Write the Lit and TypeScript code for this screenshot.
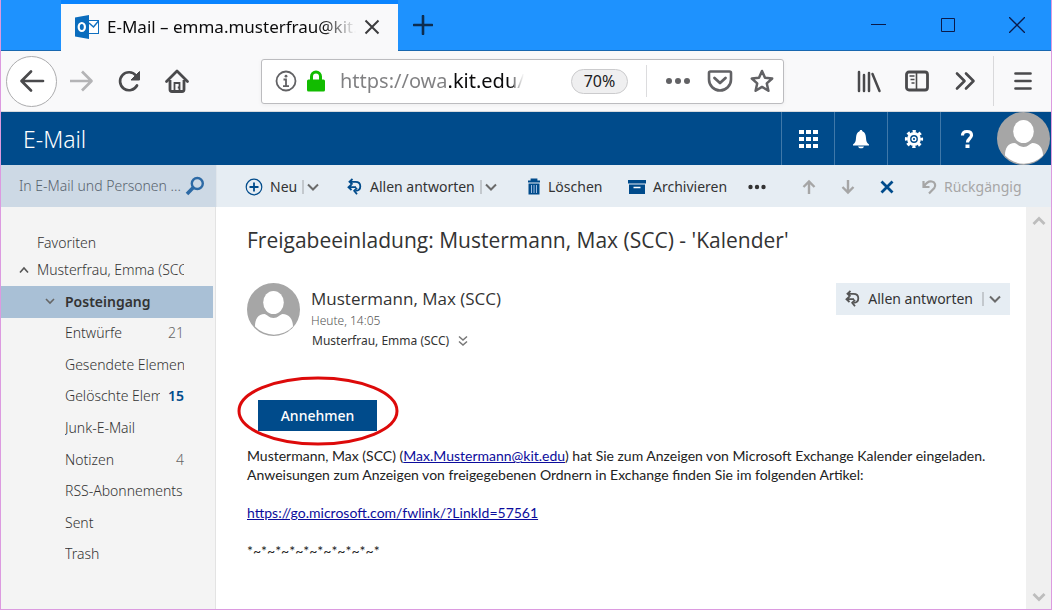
import { LitElement, html, css, svg, type TemplateResult } from "lit";
import { customElement } from "lit/decorators.js";
import { classMap } from "lit/directives/class-map.js";

interface Folder {
  name: string;
  count?: number;
  unread?: boolean;
  selected?: boolean;
}

const FOLDERS: Folder[] = [
  { name: "Posteingang", selected: true },
  { name: "Entwürfe", count: 21 },
  { name: "Gesendete Elemente" },
  { name: "Gelöschte Elemente", count: 15, unread: true },
  { name: "Junk-E-Mail" },
  { name: "Notizen", count: 4 },
  { name: "RSS-Abonnements" },
  { name: "Sent" },
  { name: "Trash" },
];

const icon = (w: number, h: number, body: TemplateResult) => html`
  <svg width=${w} height=${h} viewBox="0 0 ${w} ${h}" fill="none" stroke="currentColor" aria-hidden="true">${body}</svg>
`;

const outlook = icon(24, 24, svg`
  <rect x="11.5" y="5.5" width="12" height="13" fill="#fff" stroke="#0f6fc0"/>
  <path d="M14 8l4.500 4 5-6" stroke="#0f6fc0" stroke-width="1.500"/>
  <path d="M0 2.500L14 0v24L0 21.500z" fill="#0a6cbd" stroke="none"/>
  <ellipse cx="6.800" cy="12" rx="3.100" ry="4" stroke="#fff" stroke-width="2.200"/>`);
const tabClose = icon(16, 16, svg`<path d="M1.500 1.500l13 13M14.500 1.500l-13 13" stroke-width="2"/>`);
const plus = icon(20, 20, svg`<path d="M10 1v18M1 10h18" stroke-width="2.600" stroke-linecap="round"/>`);
const minimize = icon(16, 16, svg`<path d="M0 7.500h15"/>`);
const maximize = icon(16, 16, svg`<path d="M1.500 1.500h13v13h-13z"/>`);
const winClose = icon(16, 16, svg`<path d="M0 0l16 16M16 0L0 16" stroke-width="1.300"/>`);
const back = icon(26, 24, svg`<path d="M24 12H3M12 2.500L2.500 12l9.500 9.500" stroke-width="2.700" stroke-linecap="round" stroke-linejoin="round"/>`);
const forward = icon(26, 24, svg`<path d="M2 12h21M14 2.500l9.500 9.500-9.500 9.500" stroke-width="2.700" stroke-linejoin="round"/>`);
const reload = icon(24, 24, svg`
  <path d="M20 16.500A9 9 0 1 1 19 6.500" stroke-width="2.700" stroke-linecap="round"/>
  <path d="M22.500 2.500v8.500h-8.500z" fill="currentColor" stroke-width="1" stroke-linejoin="round"/>`);
const home = icon(26, 26, svg`
  <path d="M2.500 13.500L13 3l10.500 10.500" stroke-width="2.800" stroke-linecap="round" stroke-linejoin="round"/>
  <path d="M6 12v9.500c0 1.200.8 2 2 2h10c1.200 0 2-.8 2-2V12" stroke-width="2.800"/>
  <path d="M10.500 23v-8h5v8M13.800 19.500h1.200" stroke-width="1.800"/>`);
const info = icon(22, 22, svg`
  <circle cx="11" cy="11" r="9.500" stroke-width="1.800"/>
  <path d="M8.500 9.500H11V16M8 16.200h6" stroke-width="1.800"/><circle cx="11" cy="6.200" r="1.400" fill="currentColor" stroke="none"/>`);
const lock = icon(20, 22, svg`
  <path d="M5.500 11V6.500a4.500 4.500 0 0 1 9 0V11" stroke-width="3"/>
  <rect x="1" y="9.500" width="18" height="12" rx="1.500" fill="currentColor" stroke="none"/>`);
const pageDots = icon(26, 8, svg`<g fill="currentColor" stroke="none"><circle cx="4" cy="4" r="3"/><circle cx="13" cy="4" r="3"/><circle cx="22" cy="4" r="3"/></g>`);
const pocket = icon(26, 24, svg`
  <path d="M3.500 2.500h19a1.500 1.500 0 0 1 1.500 1.500v6.500a11 11 0 0 1-22 0V4a1.500 1.500 0 0 1 1.500-1.500z" stroke-width="2.600"/>
  <path d="M7.500 9l5.500 5 5.500-5" stroke-width="2.800" stroke-linecap="round" stroke-linejoin="round"/>`);
const star = icon(26, 26, svg`<path d="M13 3l3 6.800 7.200.7-5.400 4.900 1.600 7.400-6.400-3.900-6.400 3.900 1.600-7.400L2.800 10.500l7.200-.7z" stroke-width="2.500" stroke-linejoin="round"/>`);
const library = icon(26, 24, svg`<path d="M3 3v19M8 6v16M13 4v18M16.500 5l7 17" stroke-width="2.500" stroke-linecap="round"/>`);
const sidebarIcon = icon(26, 24, svg`
  <rect x="2.500" y="3" width="21" height="18" rx="2.500" stroke-width="2.800"/>
  <path d="M12.500 3v18" stroke-width="1.600"/><path d="M5.500 7h5M6.500 10.500h4M7.500 14h3" stroke-width="1.400"/>`);
const more = icon(22, 20, svg`<path d="M3 2.500L10.500 10 3 17.500M12 2.500l7.500 7.500-7.500 7.500" stroke-width="2.600" stroke-linecap="round" stroke-linejoin="round"/>`);
const burger = icon(20, 20, svg`<path d="M2.500 2.500h15M2.500 10h15M2.500 17.500h15" stroke-width="2.700" stroke-linecap="round"/>`);

const waffle = icon(20, 20, svg`<g fill="currentColor" stroke="none">${[0, 7, 14].map((y) =>
  [0, 7, 14].map((x) => svg`<rect x=${x + 1} y=${y + 1} width="5" height="4"/>`))}</g>`);
const bell = icon(18, 20, svg`
  <path d="M9 1c.8 0 1.200.5 1.400 1.200C13 3.200 13.800 5.500 14 9c.2 3.500.8 5 3 6.500v1H1v-1C3.200 14 3.800 12.500 4 9c.2-3.500 1-5.800 3.600-6.800C7.800 1.500 8.200 1 9 1z" fill="currentColor" stroke="none"/>
  <path d="M6 17.500h6c-.5 1.300-1.500 1.800-3 1.800s-2.500-.5-3-1.800z" fill="currentColor" stroke="none"/>`);
const gear = icon(20, 20, svg`
  <circle cx="10" cy="10" r="5.400" stroke-width="3"/>
  <circle cx="10" cy="10" r="7.700" stroke-width="2.800" stroke-dasharray="3.200 2.847" stroke-dashoffset="1.600"/>
  <circle cx="10" cy="10" r="1.800" stroke-width="1.400"/>`);
const help = icon(14, 20, svg`
  <path d="M2.500 6.500C2.500 3.500 4.500 2.500 7 2.500s4.500 1.200 4.500 3.700c0 3.300-4 3.300-4 7.300" stroke-width="3.200"/>
  <rect x="5.500" y="15.500" width="4" height="3.500" fill="currentColor" stroke="none"/>`);
const avatar = icon(53, 53, svg`
  <circle cx="26.500" cy="26.500" r="26.500" fill="#a6a6a6" stroke="none"/>
  <ellipse cx="26.500" cy="19.500" rx="10.300" ry="11.500" fill="#fff" stroke="none"/>
  <path d="M8 43.500C8 36 11 31 17.500 31c2 0 4.500 4 9 4s7-4 9-4C42 31 46 36 46 43.500a26 26 0 0 1-38 0z" fill="#fff" stroke="none"/>`);

const search = icon(20, 20, svg`<circle cx="12.300" cy="7.500" r="5.500" stroke-width="2.400"/><path d="M8.300 11.500L2 18" stroke-width="3.600"/>`);
const newItem = icon(18, 18, svg`<circle cx="9" cy="9" r="7.800" stroke-width="1.200"/><path d="M9 4.500v9M4.500 9h9" stroke-width="1.800"/>`);
const reply = icon(16, 18, svg`
  <path d="M5.500 1L2.500 3.800l3 2.700M3 3.800h5.500c3 0 4.800 1.700 4.800 4.400 0 2.800-1.800 4.500-4.800 4.600" stroke-width="1.800"/>
  <path d="M4.500 6.500L1.500 9.200l3 2.800M2 9.200h7M10 9.800l-2.800 3 2.800 3.400" stroke-width="1.800"/>`);
const trash = icon(14, 18, svg`
  <path d="M1 3.500h12M4.500 3V1.500h5V3" stroke-width="1.800"/>
  <path d="M1.500 5.500h11v11h-11z" fill="currentColor" stroke="none"/>
  <path d="M4.500 7v8M7 7v8M9.500 7v8" stroke="#9dbbe0"/>`);
const archive = icon(18, 16, svg`
  <g fill="currentColor" stroke="none"><path d="M0 1h18v3.500H0zM1 5.500h16V15H1z"/></g><path d="M5.500 8.500h7" stroke="#fff" stroke-width="1.500"/>`);
const dots = icon(18, 6, svg`<g fill="#333" stroke="none"><circle cx="2.500" cy="3" r="2.200"/><circle cx="9" cy="3" r="2.200"/><circle cx="15.500" cy="3" r="2.200"/></g>`);
const up = icon(14, 16, svg`<path d="M7 15V2.500M1.500 8L7 2.500 12.500 8" stroke-width="2.400"/>`);
const down = icon(14, 16, svg`<path d="M7 1v12.500M1.500 8L7 13.500 12.500 8" stroke-width="2.400"/>`);
const dismiss = icon(14, 14, svg`<path d="M1.500 1.500l11 11M12.500 1.500l-11 11" stroke-width="2.800"/>`);
const undo = icon(16, 16, svg`<path d="M2.500 2v6h6M3 7.500C5 4 8 2 10.800 2.500c3.500.6 4.200 4 2.500 6.500L8 14.500" stroke-width="2.200"/>`);
const chevDown = icon(12, 8, svg`<path d="M1 1.500l5 5 5-5" stroke-width="2"/>`);
const chevSmall = icon(10, 7, svg`<path d="M1 1l4 4 4-4" stroke-width="1.600"/>`);
const chevUp = icon(10, 8, svg`<path d="M1 6.500l4-4.500 4 4.500" stroke-width="1.600"/>`);
const chevDouble = icon(10, 12, svg`<path d="M1 1.500L5 5l4-3.500M1 6.500L5 10l4-3.500" stroke="#777" stroke-width="1.500"/>`);
const scrollUp = icon(14, 10, svg`<path d="M1.500 8L7 2.500 12.500 8" stroke-width="2.800"/>`);
const scrollDown = icon(14, 10, svg`<path d="M1.500 2L7 7.500 12.500 2" stroke-width="2.800"/>`);

@customElement("browser-chrome")
export class BrowserChrome extends LitElement {
  static styles = css`
    :host { display: block; font-family: "Noto Sans", "Open Sans", sans-serif; color: #0c0c0d; }
    button { border: 0; margin: 0; padding: 0; background: none; color: inherit; font: inherit; display: grid; place-items: center; flex: none; }
    svg { display: block; flex: none; }
    .titlebar { display: flex; height: 50px; background: #1e92fe; border-bottom: 1px solid #1868b0; padding-left: 60px; }
    .tab { display: flex; align-items: center; width: 337px; height: 51px; margin-bottom: -1px; box-sizing: border-box; background: #f9f9fa; border-top: 4px solid #0a84ff; padding: 0 18px 2px 14px; }
    .title { flex: 1; min-width: 0; margin: 0 8px; font-size: 17px; line-height: 24px; white-space: nowrap; overflow: hidden;
      -webkit-mask-image: linear-gradient(to left, transparent, #000 34px); mask-image: linear-gradient(to left, transparent, #000 34px); }
    .close { color: #3c3c3e; }
    .add { width: 50px; color: #0d2d50; }
    .window { margin-left: auto; display: flex; color: #0a1a4a; }
    .window button { width: 69px; }
    .nav { display: flex; align-items: center; height: 61px; box-sizing: border-box; background: #f9f9fa; border-bottom: 1px solid #d8dadd; color: #4a4a4c; padding-left: 5px; }
    .back { width: 51px; height: 51px; box-sizing: border-box; border: 1px solid #acacae; border-radius: 50%; background: #fff; }
    .tool { width: 48px; height: 51px; }
    .off { color: #b4b4b6; }
    .address { flex: 1; min-width: 0; margin: 0 61px 0 60px; display: flex; align-items: center; height: 45px; box-sizing: border-box; border: 1px solid #bcbcbf; border-radius: 3px; background: #fff; box-shadow: 0 1px 4px #0000000d; padding-left: 13px; color: #626265; }
    .lock { color: #12bc00; margin: 0 14px 0 9px; }
    .url { flex: 1; min-width: 0; border: 0; outline: 0; padding: 0; font: 20px/28px "Noto Sans", sans-serif; color: transparent;
      background: linear-gradient(to right, #808082 0 109px, #0c0c0d 109px 174px, #808082 174px, #ffffff 184px); -webkit-background-clip: text; background-clip: text; }
    .zoom { width: 57px; height: 25px; box-sizing: border-box; border: 1px solid #cbcbcd; border-radius: 13px; background: #efeff0; color: #1c1c1e; font-size: 16px; line-height: 22px; }
    .rule { width: 1px; height: 32px; background: #dcdcde; margin: 0 10px 0 18px; }
    .act { width: 42px; height: 40px; }
    .menu { width: 58px; height: 50px; border-left: 1px solid #d9d9db; margin-left: 4px; }
  `;

  render() {
    return html`
      <div class="titlebar">
        <div class="tab">
          ${outlook}<span class="title">E-Mail – emma.musterfrau@kit.edu</span>
          <button class="close" aria-label="Tab schließen">${tabClose}</button>
        </div>
        <button class="add" aria-label="Neuer Tab">${plus}</button>
        <div class="window">
          <button aria-label="Minimieren">${minimize}</button>
          <button aria-label="Maximieren">${maximize}</button>
          <button aria-label="Schließen">${winClose}</button>
        </div>
      </div>
      <nav class="nav">
        <button class="back" aria-label="Zurück">${back}</button>
        <button class="tool off" aria-label="Vor">${forward}</button>
        <button class="tool" aria-label="Neu laden">${reload}</button>
        <button class="tool" aria-label="Startseite">${home}</button>
        <div class="address">
          ${info}<span class="lock">${lock}</span>
          <input class="url" aria-label="Adresse" value="https://owa.kit.edu/" />
          <button class="zoom">70%</button>
          <span class="rule"></span>
          <button class="act" aria-label="Seitenaktionen">${pageDots}</button>
          <button class="act" aria-label="Pocket">${pocket}</button>
          <button class="act" aria-label="Lesezeichen">${star}</button>
        </div>
        <button class="tool" aria-label="Bibliothek">${library}</button>
        <button class="tool" aria-label="Sidebars">${sidebarIcon}</button>
        <button class="tool" aria-label="Weitere Werkzeuge">${more}</button>
        <button class="menu" aria-label="Menü">${burger}</button>
      </nav>
    `;
  }
}

@customElement("app-root")
export class AppRoot extends LitElement {
  static styles = css`
    :host { display: flex; flex-direction: column; min-height: 100vh; box-sizing: border-box; border: 1px solid #dc9ae0; border-top: 0; font: 14px/20px "Noto Sans", "Open Sans", sans-serif; color: #333; background: #fff; }
    button { border: 0; margin: 0; padding: 0; background: none; color: inherit; font: inherit; }
    svg { display: block; flex: none; }
    .header { display: flex; align-items: center; height: 53px; background: #004b8b; color: #fff; padding-right: 1px; }
    .brand { margin: 0 auto 0 22px; font-size: 23px; line-height: 30px; font-weight: 300; }
    .cell { width: 53px; height: 53px; box-sizing: border-box; border-left: 1px solid #3f78a9; display: grid; place-items: center; }
    .me { margin-left: 4px; }
    .body { flex: 1; display: grid; grid-template-columns: 215px minmax(0, 1fr); grid-template-rows: 42px 1fr; }
    .search { display: flex; align-items: center; background: #cdd9e5; color: #2d6aa5; padding: 0 11px 0 18px; gap: 1px; }
    .search input { flex: 1; min-width: 0; border: 0; outline: 0; padding: 0; background: none; font: 300 14px/20px "Noto Sans", sans-serif; }
    .search input::placeholder { color: #58636e; opacity: 1; }
    .commands { display: grid; grid-template-columns: 102px 180px 101px 120px 54px 39px 39px 41px auto; align-items: center; justify-content: start; background: #e6edf3; padding: 2px 0 0 28px; border-left: 1px solid #e0e6ec; white-space: nowrap; }
    .split { display: flex; align-items: center; }
    .cmd { display: flex; align-items: center; gap: 7px; }
    .cmd svg { color: #004b8b; }
    .caret { border-left: 2px solid #c3c8cd; height: 14px; margin-left: 5px; padding-left: 3px; color: #6b6b6b; }
    .muted, .cmd.muted svg { color: #a6a6a6; }
    .side { background: #f4f4f4; border-right: 1px solid #e3e3e3; padding-top: 22px; font-weight: 300; min-width: 0; }
    .group { display: flex; align-items: center; height: 27px; padding-left: 18px; gap: 8px; width: 183px; box-sizing: border-box; white-space: nowrap; color: #555; }
    .group b { font-weight: 300; overflow: hidden; color: #333; }
    .fav { padding-left: 36px; }
    .folders { list-style: none; margin: 3px 0 0; padding: 0; display: grid; grid-template-columns: minmax(0, 1fr); grid-auto-rows: 1fr; height: 284px; }
    .folder { display: flex; align-items: center; margin-right: 2px; padding: 0 29px 0 44px; color: #666; }
    .folder.selected { background: #a9c0d6; font-weight: 600; }
    .mark { width: 20px; flex: none; }
    .name { flex: 1; min-width: 0; overflow: hidden; white-space: nowrap; color: #333; }
    .count { margin-left: 8px; }
    .count.unread { color: #004b8b; font-weight: 600; }
    .reading { display: flex; }
    .message { flex: 1; min-width: 0; padding: 18px 16px 16px 31px; }
    .message h1 { margin: 0; font: 400 21px/30px "Open Sans", sans-serif; }
    .from { display: flex; margin-top: 28px; }
    .who { flex: 1; margin: 5px 0 0 11px; }
    .sender { font: 17px/22px "Open Sans", sans-serif; }
    .date { font-size: 12px; line-height: 21px; font-weight: 300; color: #555; }
    .to { font-size: 12px; line-height: 20px; padding-left: 1px; display: flex; align-items: center; gap: 9px; color: #333; }
    .replybox { align-self: flex-start; display: flex; align-items: center; height: 32px; background: #e6edf3; padding: 0 9px; white-space: nowrap; }
    .replybox .cmd svg { color: #555; }
    .replybox .caret { margin-left: 9px; padding-left: 5px; }
    .invite { position: relative; width: 119px; margin: 49px 0 15px 11px; }
    .accept { display: block; width: 119px; height: 31px; background: #004b8b; color: #fff; font-weight: 500; }
    .ring { position: absolute; left: -21px; top: -24px; pointer-events: none; }
    .text { font: 14px/19px Lato, sans-serif; color: #222; margin: 0; }
    .text + .text { margin-top: 19px; }
    .text a { color: #0c0c9c; }
    .scroll { width: 25px; background: #f0f0f0; color: #bdbdbd; display: flex; flex-direction: column; justify-content: space-between; align-items: center; padding: 9px 0 7px; box-sizing: border-box; }
  `;

  private splitButton(glyph: TemplateResult, label: string) {
    return html`
      <button class="cmd">${glyph}${label}</button>
      <button class="caret" aria-label="${label}: weitere Optionen">${chevDown}</button>
    `;
  }

  private folder(f: Folder) {
    return html`
      <li class=${classMap({ folder: true, selected: !!f.selected })}>
        <span class="mark">${f.selected ? chevSmall : ""}</span>
        <span class="name">${f.name}</span>
        ${f.count ? html`<span class=${classMap({ count: true, unread: !!f.unread })}>${f.count}</span>` : ""}
      </li>
    `;
  }

  render() {
    return html`
      <browser-chrome></browser-chrome>
      <header class="header">
        <span class="brand">E-Mail</span>
        <button class="cell" aria-label="Apps">${waffle}</button>
        <button class="cell" aria-label="Benachrichtigungen">${bell}</button>
        <button class="cell" aria-label="Einstellungen">${gear}</button>
        <button class="cell" aria-label="Hilfe">${help}</button>
        <button class="me" aria-label="Konto">${avatar}</button>
      </header>
      <div class="body">
        <label class="search">
          <input aria-label="Suche" placeholder="In E-Mail und Personen ..." />${search}
        </label>
        <div class="commands">
          <div class="split">${this.splitButton(newItem, "Neu")}</div>
          <div class="split">${this.splitButton(reply, "Allen antworten")}</div>
          <button class="cmd">${trash}Löschen</button>
          <button class="cmd">${archive}Archivieren</button>
          <button class="cmd" aria-label="Mehr">${dots}</button>
          <button class="cmd muted" aria-label="Vorherige">${up}</button>
          <button class="cmd muted" aria-label="Nächste">${down}</button>
          <button class="cmd" aria-label="Schließen">${dismiss}</button>
          <button class="cmd muted">${undo}Rückgängig</button>
        </div>
        <nav class="side">
          <div class="group fav"><b>Favoriten</b></div>
          <div class="group">${chevUp}<b>Musterfrau, Emma (SCC)</b></div>
          <ul class="folders">${FOLDERS.map((f) => this.folder(f))}</ul>
        </nav>
        <main class="reading">
          <article class="message">
            <h1>Freigabeeinladung: Mustermann, Max (SCC) - 'Kalender'</h1>
            <div class="from">
              ${avatar}
              <div class="who">
                <div class="sender">Mustermann, Max (SCC)</div>
                <div class="date">Heute, 14:05</div>
                <div class="to">Musterfrau, Emma (SCC) ${chevDouble}</div>
              </div>
              <div class="replybox">${this.splitButton(reply, "Allen antworten")}</div>
            </div>
            <div class="invite">
              <button class="accept">Annehmen</button>
              <svg class="ring" width="162" height="70" viewBox="0 0 162 70" fill="none" aria-hidden="true">
                <ellipse cx="81" cy="35" rx="79" ry="33" stroke="#dd0a0a" stroke-width="3" />
              </svg>
            </div>
            <p class="text">
              Mustermann, Max (SCC) (<a href="mailto:Max.Mustermann@kit.edu">Max.Mustermann@kit.edu</a>) hat Sie zum Anzeigen von Microsoft Exchange Kalender eingeladen.<br />
              Anweisungen zum Anzeigen von freigegebenen Ordnern in Exchange finden Sie im folgenden Artikel:
            </p>
            <p class="text"><a href="https://go.microsoft.com/fwlink/?LinkId=57561">https://go.microsoft.com/fwlink/?LinkId=57561</a></p>
            <p class="text">*~*~*~*~*~*~*~*~*~*</p>
          </article>
          <div class="scroll">${scrollUp}${scrollDown}</div>
        </main>
      </div>
    `;
  }
}
